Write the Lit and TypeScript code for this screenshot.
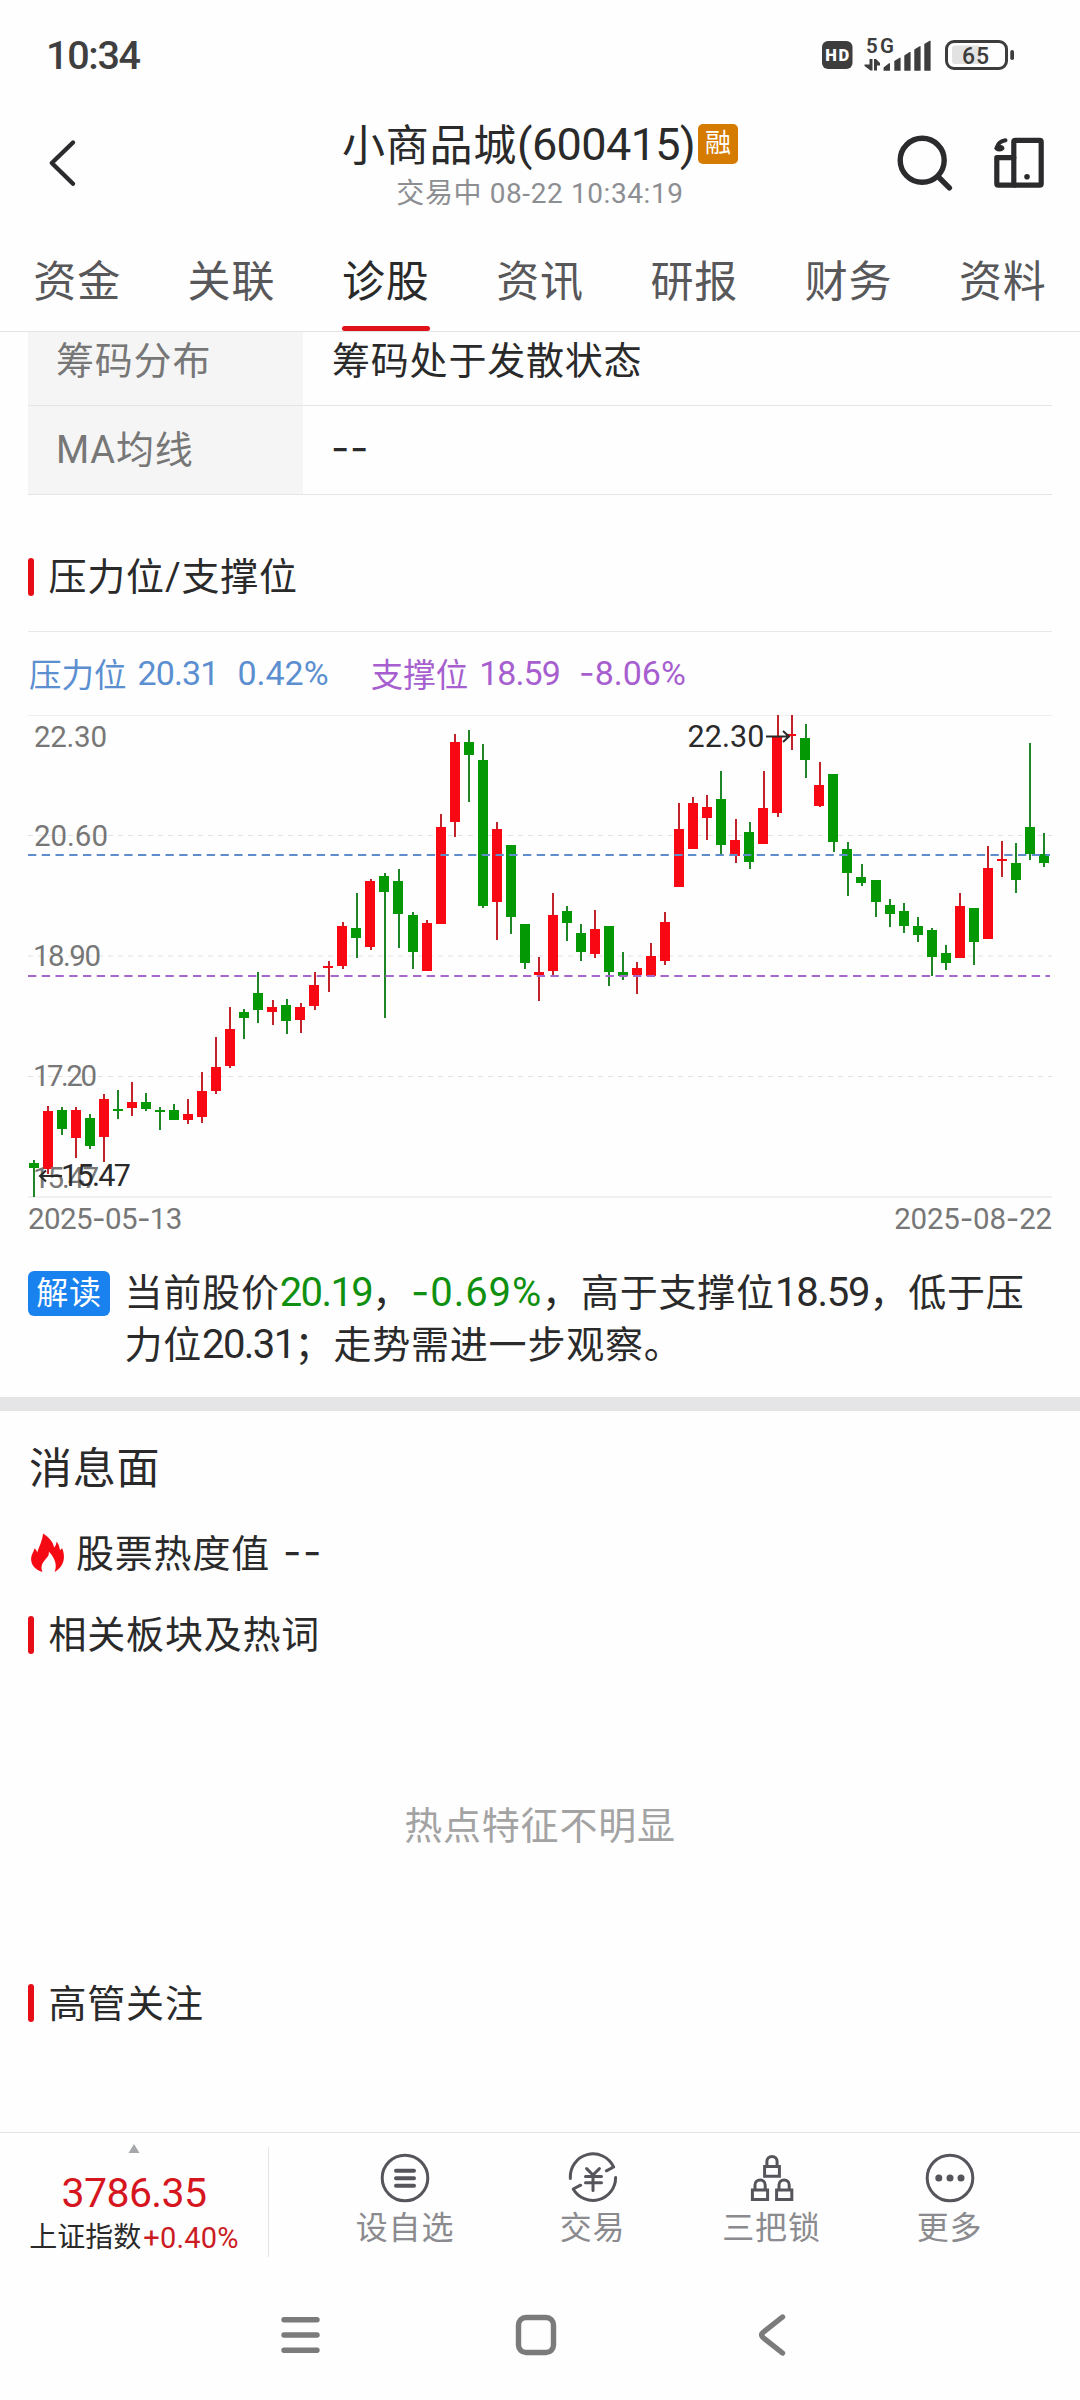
import { LitElement, html, svg, css } from "lit";
import { customElement } from "lit/decorators.js";
import { classMap } from "lit/directives/class-map.js";

type Candle = [dir: "r" | "g", high: number, top: number, bottom: number, low: number];

/* Daily candles; levels are counted downwards on the chart's own grid. */
const CANDLES: Candle[] = [
  ["g", 1336, 1344, 1359, 1443], ["r", 1179, 1193, 1361, 1377], ["g", 1183, 1190, 1246, 1264],
  ["r", 1183, 1190, 1272, 1330], ["g", 1202, 1214, 1295, 1304], ["r", 1144, 1159, 1269, 1342],
  ["g", 1132, 1188, 1193, 1216], ["r", 1111, 1167, 1185, 1209], ["g", 1142, 1167, 1188, 1194],
  ["g", 1183, 1190, 1195, 1249], ["g", 1173, 1190, 1220, 1221], ["r", 1160, 1202, 1219, 1231],
  ["r", 1082, 1135, 1211, 1228], ["r", 980, 1066, 1135, 1146], ["r", 891, 955, 1063, 1070],
  ["g", 897, 906, 923, 986], ["g", 790, 851, 900, 937], ["r", 873, 891, 906, 944],
  ["g", 869, 886, 932, 970], ["r", 880, 891, 929, 967], ["r", 790, 828, 889, 902],
  ["r", 758, 772, 780, 848], ["r", 646, 656, 772, 781], ["g", 562, 662, 691, 750],
  ["r", 520, 526, 717, 726], ["g", 502, 511, 558, 925], ["g", 491, 526, 621, 720],
  ["g", 617, 624, 732, 781], ["r", 638, 648, 787, 787], ["r", 331, 369, 650, 650],
  ["r", 98, 122, 354, 397], ["g", 88, 122, 160, 296], ["g", 129, 174, 598, 605],
  ["r", 354, 375, 587, 696], ["g", 421, 421, 630, 681], ["g", 650, 650, 764, 781],
  ["r", 748, 790, 799, 874], ["r", 561, 624, 787, 802], ["g", 598, 613, 648, 700],
  ["g", 651, 677, 732, 759], ["r", 609, 665, 738, 750], ["g", 656, 656, 790, 832],
  ["g", 732, 790, 801, 814], ["r", 761, 778, 799, 854], ["r", 706, 743, 801, 803],
  ["r", 617, 645, 758, 771], ["r", 299, 375, 543, 543], ["r", 281, 299, 433, 433],
  ["r", 277, 311, 343, 408], ["g", 207, 287, 421, 450], ["r", 345, 407, 453, 473],
  ["g", 354, 383, 470, 490], ["r", 207, 314, 418, 418], ["r", 45, 106, 328, 341],
  ["r", 44, 99, 105, 146], ["g", 70, 110, 174, 226], ["r", 180, 247, 308, 312],
  ["g", 215, 215, 412, 442], ["g", 414, 433, 502, 569], ["g", 478, 514, 531, 541],
  ["g", 523, 523, 587, 630], ["g", 578, 595, 621, 660], ["g", 590, 613, 656, 677],
  ["g", 631, 656, 682, 704], ["g", 662, 668, 746, 802], ["g", 713, 735, 764, 784],
  ["r", 560, 598, 749, 749], ["g", 604, 604, 703, 769], ["r", 423, 488, 694, 694],
  ["r", 409, 462, 467, 513], ["g", 415, 473, 523, 560], ["g", 125, 369, 447, 466],
  ["g", 387, 447, 473, 485],
];
const STEP = 14.03;
const toY = (level: number) => Math.round((level - 44) / 2.904);

@customElement("kline-chart")
export class KlineChart extends LitElement {
  static styles = css`
    :host { display: block; letter-spacing: 0; }
    svg { display: block; overflow: visible; }
    text { font-family: Roboto, "Noto Sans CJK SC", sans-serif; font-size: 29.5px; }
    .r { fill: #f80812; }
    .g { fill: #049804; }
    .wick.r { fill: #c2222a; }
    .wick.g { fill: #1f8526; }
    .axis { fill: #777; }
    .mark { fill: #2a2a2a; font-size: 30.5px; }
    .arrow { fill: none; stroke: #2a2a2a; stroke-width: 2; }
    .edge { stroke: #efefef; stroke-width: 1; }
    .base { stroke: #f0f0f0; stroke-width: 2; }
    .grid { stroke: #e2e2e2; stroke-width: 1; stroke-dasharray: 5 5; }
    .grid.soft { stroke: #f0f0f0; stroke-width: 2; }
    .press { stroke: #5f8ccb; stroke-width: 2; stroke-dasharray: 8.3 5.45; }
    .hold { stroke: #a666cc; stroke-width: 2; stroke-dasharray: 8.3 5.45; }
  `;

  render() {
    return html`<svg width="1024" height="484" viewBox="0 0 1024 484">
      <line class="edge" x1="0" x2="1024" y1="0.5" y2="0.5" />
      <line class="grid" x1="0" x2="1024" y1="120.5" y2="120.5" />
      <line class="grid soft" x1="0" x2="1024" y1="241" y2="241" />
      <line class="grid" x1="0" x2="1024" y1="361.5" y2="361.5" />
      <line class="base" x1="0" x2="1024" y1="482" y2="482" />
      ${CANDLES.map(([dir, high, top, bottom, low], i) => {
        const left = Math.round(0.7 + STEP * i);
        const wick = Math.round(5 + STEP * i);
        return svg`
          <rect class="wick ${dir}" x=${wick} y=${toY(high)} width="2" height=${toY(low) - toY(high)} />
          <rect class=${dir} x=${left} y=${toY(top)} width="10" height=${Math.max(2, toY(bottom) - toY(top))} />`;
      })}
      <line class="press" x1="0" x2="1022" y1="140" y2="140" />
      <line class="hold" x1="0" x2="1022" y1="261" y2="261" />
      <text class="axis" x="6" y="31.5" textLength="73">22.30</text>
      <text class="axis" x="6" y="131" textLength="74">20.60</text>
      <text class="axis" x="5" y="251" textLength="68">18.90</text>
      <text class="axis" x="5" y="371" textLength="64">17.20</text>
      <text class="axis" x="5" y="472.5" textLength="66">15.47</text>
      <path class="arrow" d="M34 461H12M18 455.5L12 461L18 466.5" />
      <text class="mark" x="33" y="470.5" textLength="70">15.47</text>
      <text class="mark" x="659.5" y="31.5" textLength="77">22.30</text>
      <path class="arrow" d="M738 21.5H761M755 16L761 21.5L755 27" />
    </svg>`;
  }
}

const ICONS: Record<string, unknown> = {
  watch: svg`<circle cx="26" cy="26" r="22.8" />
    <path stroke-width="4" d="M17 18.7H35M17 26.2H35M17 33.7H35" />`,
  trade: svg`<path d="M3.4 26.5A22.7 22.7 0 0 1 46.6 15L39.4 18.8" />
    <path d="M48.6 25.5A22.7 22.7 0 0 1 6.2 37L13.6 33.2" />
    <path d="M19.6 16.6L26 23L32.4 16.6M26 23V38.6M18.5 24.6H34.5M18.5 30.8H34.5" />`,
  locks: svg`<path stroke-linejoin="miter" d="M18.6 14.5H33.4V24.3H18.6ZM20.9 14V9.5A5.1 5.1 0 0 1 31.1 9.5V14
    M6.4 38H21.6V47.6H6.4ZM9 37.5V33A5.1 5.1 0 0 1 19.2 33V37.5
    M30.6 38H45.8V47.6H30.6ZM33 37.5V33A5.1 5.1 0 0 1 43.2 33V37.5" />`,
  more: svg`<circle cx="26" cy="26" r="22.8" />
    <g fill="#55555b" stroke="none"><circle cx="14.8" cy="26" r="3.5" /><circle cx="26" cy="26" r="3.5" /><circle cx="37" cy="26" r="3.5" /></g>`,
};

@customElement("app-root")
export class AppRoot extends LitElement {
  static styles = css`
    :host {
      display: flex; flex-direction: column; width: 1080px; height: 2400px;
      background: #fefefe; color: #2a2a2b; overflow: hidden;
      font-family: Roboto, "Noto Sans CJK SC", sans-serif;
      font-size: 38px; letter-spacing: 0.8px; white-space: nowrap;
    }
    * { box-sizing: border-box; }
    svg { display: block; flex: none; }

    .status { height: 108px; padding: 1px 64px 0 46px; display: flex; align-items: center; justify-content: space-between; }
    .clock { font-size: 39.5px; font-weight: 500; letter-spacing: -1.3px; color: #3f3f3f; line-height: 48px; margin-top: 2px; }
    .status text { font-family: Roboto, sans-serif; letter-spacing: 0; }

    .bar { height: 110px; display: grid; grid-template-columns: 300px 1fr 300px; }
    .back { padding: 30px 0 0 44px; }
    .tools { padding: 24px 0 0 115px; display: flex; gap: 33px; }
    .heading { display: flex; flex-direction: column; align-items: center; }
    .name { display: flex; align-items: center; height: 60px; margin-top: 6px; font-size: 43px; }
    .stock { margin-bottom: 5px; }
    .code { font-size: 45px; letter-spacing: -0.6px; }
    .margin { width: 40px; height: 40px; margin-left: 3px; border-radius: 5px; background: #d47b00; color: #fff;
      font-size: 26px; line-height: 38px; text-align: center; letter-spacing: 0; }
    .time { font-size: 28px; line-height: 36px; margin-top: 2px; color: #8d8e92; letter-spacing: 0.6px; }

    .tabs { height: 114px; display: grid; grid-template-columns: repeat(7, 1fr); border-bottom: 1px solid #e4e4e4; flex: none; }
    .tab { display: flex; flex-direction: column; align-items: center; justify-content: space-between;
      padding-top: 34px; font-size: 43px; line-height: 60px; color: #58585a; }
    .tab.on { color: #2a2a2b; }
    .tab.on::after { content: ""; width: 88px; height: 5px; border-radius: 3px; background: #e01119; }

    .table { height: 163px; margin: 0 28px; overflow: hidden; display: flex; flex-direction: column; justify-content: flex-end; flex: none; }
    .row { height: 89px; flex: none; display: flex; border-bottom: 1px solid #e5e5e5; line-height: 89px; }
    .key { width: 275px; padding-left: 28px; background: #f5f5f5; color: #777; }
    .val { padding-left: 29px; }
    .dashes { font-family: Inter, sans-serif; font-size: 40px; letter-spacing: 0.7px; }
    .val.dashes { padding-left: 28px; line-height: 84px; }

    .sub { display: flex; align-items: center; gap: 14.5px; padding: 0 28px; flex: none; }
    .sub::before { content: ""; width: 6px; height: 38px; border-radius: 3px; background: #e60d17; }
    .sub span { margin-bottom: 6px; }
    .sub.levels { height: 137px; margin: 0 28px; padding: 27px 0 0; border-bottom: 1px solid #e8e8e8; }
    .sub.words { height: 107px; }
    .sub.execs { height: 78px; }

    .legend { height: 83px; padding: 0 0 2px 29px; display: flex; align-items: center; gap: 42px; font-size: 32.5px; flex: none; letter-spacing: 0; }
    .level { display: flex; align-items: center; }
    .level b { font-weight: 400; font-size: 34px; letter-spacing: -0.9px; margin-left: 11px; }
    .level b + b { margin-left: 19px; letter-spacing: 0; }
    .neg { font-family: Inter, sans-serif; font-style: normal; }
    .press { color: #5b8fd0; }
    .hold { color: #a75fcf; }

    .chart { margin: 0 28px; height: 484px; flex: none; }
    .dates { height: 66px; padding: 0 28px; display: flex; justify-content: space-between;
      font-size: 29.5px; line-height: 38px; color: #777; letter-spacing: -0.6px; flex: none; }
    .dates span + span { letter-spacing: -0.2px; }

    .reading { height: 132px; padding-left: 28px; display: flex; gap: 14.5px; line-height: 52px; flex: none; }
    .reading p { margin: 1px 0 0; }
    .tag { width: 82px; height: 45px; margin-top: 6px; border-radius: 6px; background: #1a82ee; color: #fff;
      font-size: 32px; line-height: 44px; text-align: center; }
    .num { font-size: 40px; letter-spacing: -1.2px; }
    .tight { letter-spacing: -1.6px; }
    .wide { letter-spacing: 0.9px; }
    .down { color: #109010; }

    .band { height: 14px; background: #e5e5e8; flex: none; }
    .block { height: 114px; padding-left: 29px; font-size: 43px; line-height: 116px; flex: none; }
    .hot { height: 56px; padding-left: 29px; display: flex; align-items: center; flex: none; }
    .hot .label { margin: 0 0 5px 11px; }
    .hot .dashes { margin: 0 0 4px 13px; letter-spacing: 1.6px; }
    .empty { height: 276px; line-height: 277px; text-align: center; color: #a3a3a3; flex: none; }
    .rest { flex: 1; }

    .dock { height: 136px; display: flex; border-top: 1px solid #e4e4e4; flex: none; }
    .index { width: 269px; height: 110px; margin-top: 14px; border-right: 1px solid #e4e4e4;
      display: flex; flex-direction: column; align-items: center; }
    .index svg { margin-top: -3px; }
    .points { font-size: 41px; line-height: 48px; margin-top: 16px; color: #d6161e; letter-spacing: -0.6px; }
    .market { font-size: 28px; line-height: 36px; letter-spacing: 0; display: flex; margin-top: 3px; }
    .market span { color: #cb1c24; letter-spacing: 0.2px; margin-left: 2px; font-size: 29px; }
    .actions { display: grid; grid-template-columns: 188px 187px 171px 185px; padding-left: 42px; }
    .action { display: flex; flex-direction: column; align-items: center; padding-top: 19px; }
    .action svg { fill: none; stroke: #55555b; stroke-width: 3; stroke-linecap: round; stroke-linejoin: round; }
    .action div { font-size: 32px; line-height: 44px; color: #8b8b8f; margin-top: 2px; }

    .nav { height: 132px; padding: 1px 292px 0 278px; display: flex; align-items: center; justify-content: space-between; flex: none; }
    .nav svg { fill: none; stroke: #7b7b7b; stroke-width: 5.4; stroke-linecap: round; stroke-linejoin: round; }
    .nav .home { margin-right: 6px; }
  `;

  private tabs = ["资金", "关联", "诊股", "资讯", "研报", "财务", "资料"];
  private actions = [["watch", "设自选"], ["trade", "交易"], ["locks", "三把锁"], ["more", "更多"]];

  private statusIcons() {
    return html`<svg width="196" height="40" viewBox="820 34 196 40">
      <rect x="822" y="40" width="30.5" height="28" rx="6" fill="#3d3d3d" />
      <text x="825.3" y="60" font-size="16.5" font-weight="900" fill="#fff" textLength="24">HD</text>
      <text x="866" y="52" font-size="20.5" font-weight="600" fill="#3d3d3d" textLength="28">5G</text>
      <g fill="#3d3d3d">
        <path d="M869.5 58H872.5V69.5H870.5L864.5 65V63.5H869.5ZM874 58H876L880 62V64.5H877V69.5H874Z" />
        <path d="M883.6 66.5L889 62.3H890V69.7H883.6ZM894.3 60L899.6 56.7H900.6V69.7H894.3ZM904.3 54.5L909.6 51H910.6V69.7H904.3ZM914.3 48.5L919.6 45.3H920.6V69.7H914.3ZM924.3 43L929.6 39.7H930.6V69.7H924.3Z" />
        <rect x="1010.3" y="49" width="3.7" height="10" rx="1.8" />
      </g>
      <rect x="952" y="44.5" width="29" height="18.5" rx="3" fill="#e2e2e2" />
      <rect x="946.5" y="40.5" width="60" height="27" rx="7.5" fill="none" stroke="#3d3d3d" stroke-width="3" />
      <text x="962" y="62.5" font-size="23" font-weight="500" fill="#3d3d3d" textLength="27">65</text>
    </svg>`;
  }

  render() {
    const dash = html`<i class="neg">-</i>`;
    return html`
      <div class="status"><div class="clock">10:34</div>${this.statusIcons()}</div>
      <div class="bar">
        <div class="back">
          <svg width="40" height="50" viewBox="44 138 40 50"><path d="M73 142.5L51.8 163L73 183.8" fill="none" stroke="#2b2b2d" stroke-width="4.4" stroke-linecap="round" stroke-linejoin="round" /></svg>
        </div>
        <div class="heading">
          <div class="name"><span class="stock">小商品城</span><span class="code">(600415)</span><span class="margin">融</span></div>
          <div class="time">交易中 08-22 10:34:19</div>
        </div>
        <div class="tools">
          <svg width="62" height="62" viewBox="895 132 62 62" fill="none" stroke="#2b2b2d" stroke-width="5.4" stroke-linecap="round">
            <circle cx="922.2" cy="160.3" r="22" /><path d="M939 177.5L949.4 187.8" />
          </svg>
          <svg width="58" height="62" viewBox="990 132 58 62" fill="none" stroke="#2b2b2d" stroke-width="5.2" stroke-linecap="round">
            <rect x="1013.8" y="140.4" width="27.4" height="44.8" rx="1.5" />
            <path d="M1013.8 157.6H996.8V183.7Q996.8 185.2 998.3 185.2H1013.8" stroke-linejoin="round" />
            <circle cx="1027" cy="176.7" r="2.8" fill="#2b2b2d" stroke="none" />
            <path d="M1005.5 140.3Q998.5 141.5 997 147" stroke-width="4" />
            <ellipse cx="999.4" cy="148.2" rx="5" ry="3.4" fill="#2b2b2d" stroke="none" />
          </svg>
        </div>
      </div>
      <div class="tabs">
        ${this.tabs.map((t, i) => html`<div class=${classMap({ tab: true, on: i === 2 })}>${t}</div>`)}
      </div>
      <div class="table">
        <div class="row"><div class="key">筹码分布</div><div class="val">筹码处于发散状态</div></div>
        <div class="row"><div class="key">MA均线</div><div class="val dashes">--</div></div>
      </div>
      <div class="sub levels"><span>压力位/支撑位</span></div>
      <div class="legend">
        <div class="level press">压力位<b>20.31</b><b>0.42%</b></div>
        <div class="level hold">支撑位<b>18.59</b><b>${dash}8.06%</b></div>
      </div>
      <kline-chart class="chart"></kline-chart>
      <div class="dates"><span>2025${dash}05${dash}13</span><span>2025${dash}08${dash}22</span></div>
      <div class="reading">
        <div class="tag">解读</div>
        <p>当前股价<span class="num down tight">20.19</span>，<span class="num down wide">${dash}0.69%</span>，高于支撑位<span class="num">18.59</span>，低于压<br />力位<span class="num tight">20.31</span>；走势需进一步观察。</p>
      </div>
      <div class="band"></div>
      <div class="block">消息面</div>
      <div class="hot">
        <svg width="36" height="42" viewBox="0 0 36 42"><path fill="#f50a14" d="M14 1.500C20 5.500 24.500 10 25 15.500C26.800 14 27.500 11.500 27.300 9.500C30 12 30.500 15.500 31 18C32 17.600 32.500 17 33 16C36.500 24 36 34 25.500 40C28.500 33 26 26 19.800 19.500C20.500 24 17.500 26 15.500 28.500C12.500 32 11.500 36 13.500 40C5 37.500 1.500 31.500 2.200 25.500C2.800 22 4.500 20 5.500 16.500C7 17.500 7.800 19 8.300 20.500C9.300 16 13.500 9 14 1.500Z" /></svg>
        <span class="label">股票热度值</span><span class="dashes">--</span>
      </div>
      <div class="sub words"><span>相关板块及热词</span></div>
      <div class="empty">热点特征不明显</div>
      <div class="sub execs"><span>高管关注</span></div>
      <div class="rest"></div>
      <div class="dock">
        <div class="index">
          <svg width="12" height="9" viewBox="0 0 12 9"><path d="M6 0L11.500 9H0.500Z" fill="#a6a7aa" /></svg>
          <div class="points">3786.35</div>
          <div class="market">上证指数<span>+0.40%</span></div>
        </div>
        <div class="actions">
          ${this.actions.map(([icon, label]) => html`<div class="action">
            <svg width="52" height="52" viewBox="0 0 52 52">${ICONS[icon]}</svg>
            <div>${label}</div>
          </div>`)}
        </div>
      </div>
      <div class="nav">
        <svg width="44" height="44" viewBox="0 0 44 44"><path d="M6 6.700H39M6 22H39M6 37.300H39" /></svg>
        <svg class="home" width="44" height="44" viewBox="0 0 44 44"><rect x="4.500" y="4.500" width="35" height="35" rx="7.500" /></svg>
        <svg width="32" height="44" viewBox="0 0 32 44"><path d="M26.500 4L7 19.500Q4.500 22 7 24.500L26.500 40" /></svg>
      </div>
    `;
  }
}
